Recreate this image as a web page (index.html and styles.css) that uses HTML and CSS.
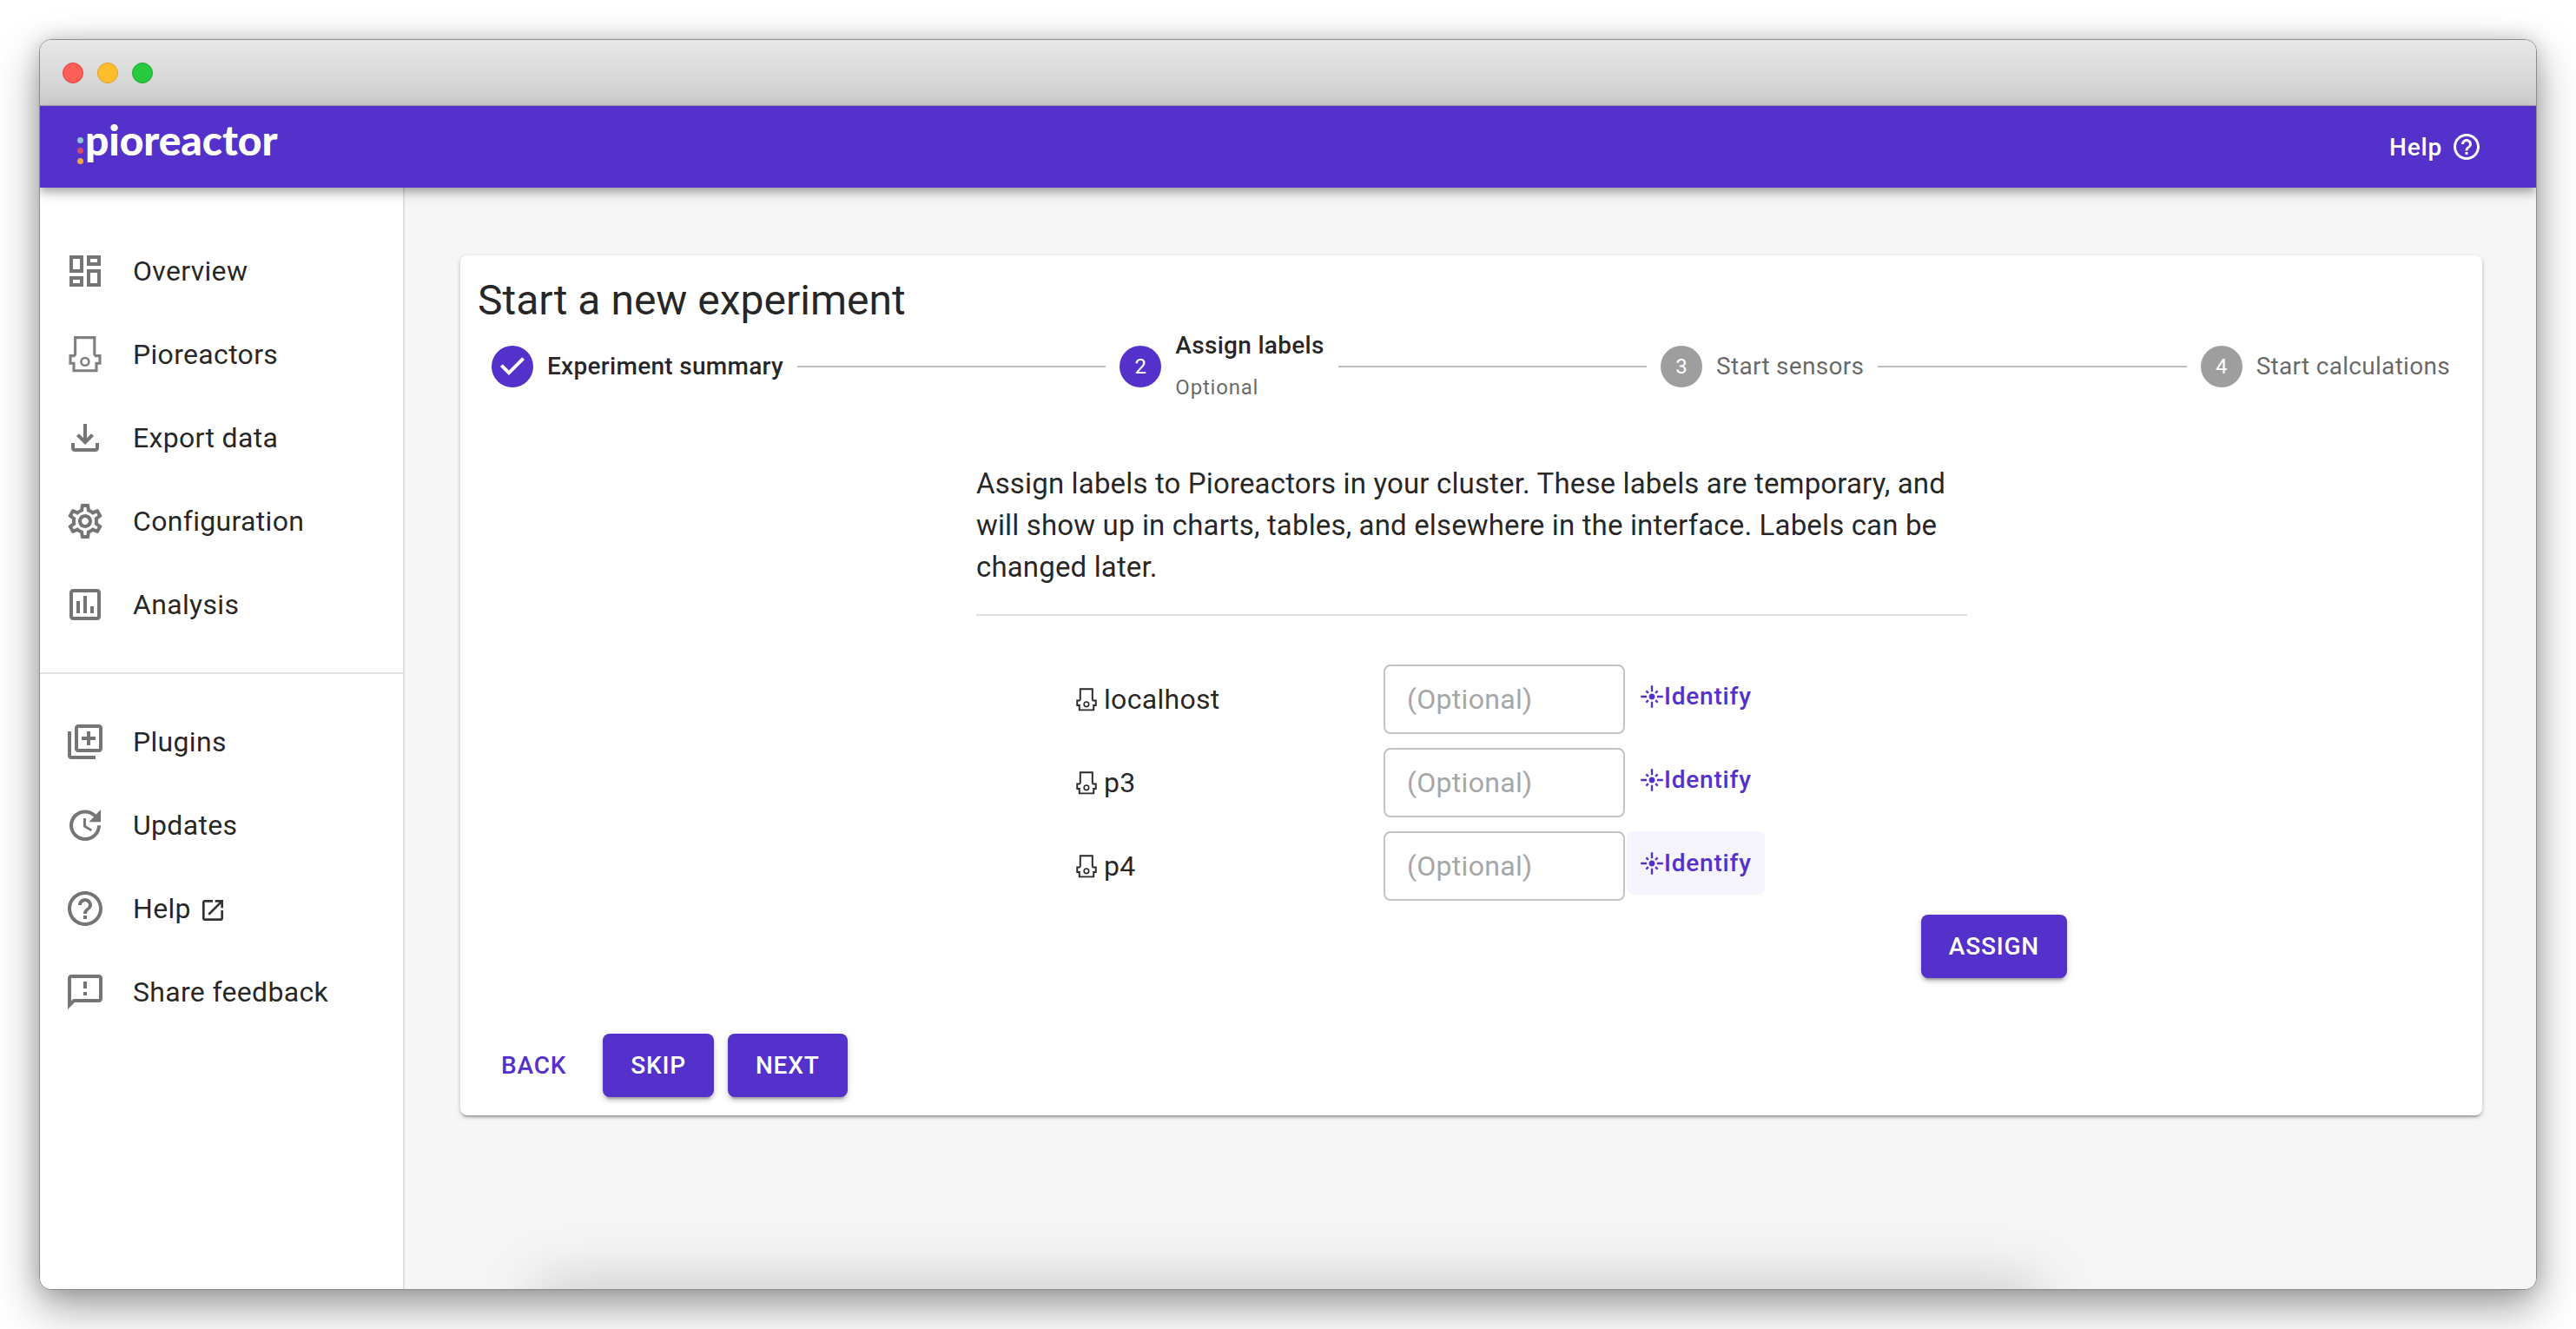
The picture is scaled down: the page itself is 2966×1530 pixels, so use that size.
FILE: index.html
```html
<!DOCTYPE html>
<html lang="en">
<head>
<meta charset="utf-8">
<title>Pioreactor</title>
<link rel="stylesheet" href="styles.css">
</head>
<body>
<svg class="defs" width="0" height="0" aria-hidden="true">
  <symbol id="pio" viewBox="0 0 38 42">
    <path d="M7.6 1.6H29.8V21L31.2 22.6H36V31.2H32V39.8H6V31.2H2V22.6H6.2L7.6 21Z" fill="none" stroke="currentColor" stroke-width="3.1"/>
    <circle cx="18.9" cy="29.4" r="4.4" fill="none" stroke="currentColor" stroke-width="2.6"/>
  </symbol>
  <symbol id="flare" viewBox="0 0 24 24"><path d="M7 11H1v2h6v-2zm2.17-3.24L7.05 5.64 5.64 7.05l2.12 2.12 1.41-1.41zM13 1h-2v6h2V1zm5.36 6.05-1.41-1.41-2.12 2.12 1.41 1.41 2.12-2.12zM17 11v2h6v-2h-6zm-5-2c-1.66 0-3 1.34-3 3s1.34 3 3 3 3-1.34 3-3-1.34-3-3-3zm2.83 7.24 2.12 2.12 1.41-1.41-2.12-2.12-1.41 1.41zm-9.19.71 1.41 1.41 2.12-2.12-1.41-1.41-2.12 2.12zM11 23h2v-6h-2v6z"/></symbol>
  <symbol id="help" viewBox="0 0 24 24"><path d="M11 18h2v-2h-2v2zm1-16C6.48 2 2 6.48 2 12s4.48 10 10 10 10-4.48 10-10S17.52 2 12 2zm0 18c-4.41 0-8-3.59-8-8s3.59-8 8-8 8 3.59 8 8-3.59 8-8 8zm0-14c-2.21 0-4 1.79-4 4h2c0-1.1.9-2 2-2s2 .9 2 2c0 2-3 1.75-3 5h2c0-2.25 3-2.5 3-5 0-2.21-1.79-4-4-4z"/></symbol>
</svg>
<div class="window">
  <div class="titlebar">
    <span class="light red"></span><span class="light yellow"></span><span class="light green"></span>
  </div>
  <header class="appbar">
    <div class="logo">
      <span class="dots"><i class="dot teal"></i><i class="dot rose"></i><i class="dot amber"></i></span>
      <span class="wordmark">pioreactor</span>
    </div>
    <a class="help-link">Help <svg class="help-icon"><use href="#help"/></svg></a>
  </header>
  <div class="body">
    <nav class="sidebar">
      <ul class="nav first">
        <li><svg class="nav-icon" viewBox="0 0 24 24"><path d="M19 5v2h-4V5h4M9 5v6H5V5h4m10 8v6h-4v-6h4M9 17v2H5v-2h4M21 3h-8v6h8V3zM11 3H3v10h8V3zm10 8h-8v10h8V11zm-10 4H3v6h8v-6z"/></svg>Overview</li>
        <li><svg class="nav-pio"><use href="#pio"/></svg>Pioreactors</li>
        <li><svg class="nav-icon" viewBox="0 0 24 24"><path d="M18 15v3H6v-3H4v3c0 1.1.9 2 2 2h12c1.1 0 2-.9 2-2v-3h-2zm-1-4-1.41-1.41L13 12.17V4h-2v8.17L8.41 9.59 7 11l5 5 5-5z"/></svg>Export data</li>
        <li><svg class="nav-icon" viewBox="0 0 24 24"><path d="M19.43 12.98c.04-.32.07-.64.07-.98 0-.34-.03-.66-.07-.98l2.11-1.65c.19-.15.24-.42.12-.64l-2-3.46c-.09-.16-.26-.25-.44-.25-.06 0-.12.01-.17.03l-2.49 1c-.52-.4-1.08-.73-1.69-.98l-.38-2.65C14.46 2.18 14.25 2 14 2h-4c-.25 0-.46.18-.49.42l-.38 2.65c-.61.25-1.17.59-1.69.98l-2.49-1c-.06-.02-.12-.03-.18-.03-.17 0-.34.09-.43.25l-2 3.46c-.13.22-.07.49.12.64l2.11 1.65c-.04.32-.07.65-.07.98 0 .33.03.66.07.98l-2.11 1.65c-.19.15-.24.42-.12.64l2 3.46c.09.16.26.25.44.25.06 0 .12-.01.17-.03l2.49-1c.52.4 1.08.73 1.69.98l.38 2.65c.03.24.24.42.49.42h4c.25 0 .46-.18.49-.42l.38-2.65c.61-.25 1.17-.59 1.69-.98l2.49 1c.06.02.12.03.18.03.17 0 .34-.09.43-.25l2-3.46c.12-.22.07-.49-.12-.64l-2.11-1.65zm-1.98-1.71c.04.31.05.52.05.73 0 .21-.02.43-.05.73l-.14 1.13.89.7 1.08.84-.7 1.21-1.27-.51-1.04-.42-.9.68c-.43.32-.84.56-1.25.73l-1.06.43-.16 1.13-.2 1.35h-1.4l-.19-1.35-.16-1.13-1.06-.43c-.43-.18-.83-.41-1.23-.71l-.91-.7-1.06.43-1.27.51-.7-1.21 1.08-.84.89-.7-.14-1.13c-.03-.31-.05-.54-.05-.74s.02-.43.05-.73l.14-1.13-.89-.7-1.08-.84.7-1.21 1.27.51 1.04.42.9-.68c.43-.32.84-.56 1.25-.73l1.06-.43.16-1.13.2-1.35h1.39l.19 1.35.16 1.13 1.06.43c.43.18.83.41 1.23.71l.91.7 1.06-.43 1.27-.51.7 1.21-1.07.85-.89.7.14 1.13zM12 8c-2.21 0-4 1.79-4 4s1.79 4 4 4 4-1.79 4-4-1.79-4-4-4zm0 6c-1.1 0-2-.9-2-2s.9-2 2-2 2 .9 2 2-.9 2-2 2z"/></svg>Configuration</li>
        <li><svg class="nav-icon" viewBox="0 0 24 24"><path d="M9 17H7v-7h2v7zm4 0h-2V7h2v10zm4 0h-2v-4h2v4zm2 2H5V5h14v14zm0-16H5c-1.1 0-2 .9-2 2v14c0 1.1.9 2 2 2h14c1.1 0 2-.9 2-2V5c0-1.1-.9-2-2-2z"/></svg>Analysis</li>
      </ul>
      <ul class="nav second">
        <li><svg class="nav-icon" viewBox="0 0 24 24"><path d="M4 6H2v14c0 1.1.9 2 2 2h14v-2H4V6zm16-4H8c-1.1 0-2 .9-2 2v12c0 1.1.9 2 2 2h12c1.1 0 2-.9 2-2V4c0-1.1-.9-2-2-2zm0 14H8V4h12v12zm-7-2h2v-3h3V9h-3V6h-2v3h-3v2h3z"/></svg>Plugins</li>
        <li><svg class="nav-icon" viewBox="0 0 24 24"><path d="M21 10.12h-6.78l2.74-2.82c-2.73-2.7-7.15-2.8-9.88-.1-2.73 2.71-2.73 7.08 0 9.79s7.15 2.71 9.88 0C18.32 15.65 19 14.08 19 12.1h2c0 1.98-.88 4.55-2.64 6.29-3.51 3.48-9.21 3.48-12.72 0-3.5-3.47-3.53-9.11-.02-12.58s9.14-3.47 12.65 0L21 3v7.12zM12.5 8v4.25l3.5 2.08-.72 1.21L11 13V8h1.5z"/></svg>Updates</li>
        <li><svg class="nav-icon"><use href="#help"/></svg>Help<svg class="ext-icon" viewBox="0 0 24 24"><path d="M19 19H5V5h7V3H5c-1.11 0-2 .9-2 2v14c0 1.1.89 2 2 2h14c1.1 0 2-.9 2-2v-7h-2v7zM14 3v2h3.59l-9.83 9.83 1.41 1.41L19 6.41V10h2V3h-7z"/></svg></li>
        <li><svg class="nav-icon" viewBox="0 0 24 24"><path d="M20 2H4c-1.1 0-1.99.9-1.99 2L2 22l4-4h14c1.1 0 2-.9 2-2V4c0-1.1-.9-2-2-2zm0 14H5.17L4 17.17V4h16v12zm-9-4h2v2h-2zm0-6h2v4h-2z"/></svg>Share feedback</li>
      </ul>
    </nav>
    <main class="main">
      <section class="card">
        <h1 class="title">Start a new experiment</h1>
        <div class="stepper">
          <div class="step">
            <svg class="step-check" viewBox="0 0 24 24"><path d="M12 0a12 12 0 1 0 0 24 12 12 0 0 0 0-24zm-2 17l-5-5 1.4-1.4 3.6 3.6 7.6-7.6L19 8l-9 9z"/></svg>
            <span class="step-label done">Experiment summary</span>
          </div>
          <span class="connector"></span>
          <div class="step">
            <span class="step-num active">2</span>
            <span class="step-text">
              <span class="step-label done">Assign labels</span>
              <span class="step-optional">Optional</span>
            </span>
          </div>
          <span class="connector"></span>
          <div class="step">
            <span class="step-num">3</span>
            <span class="step-label">Start sensors</span>
          </div>
          <span class="connector"></span>
          <div class="step">
            <span class="step-num">4</span>
            <span class="step-label">Start calculations</span>
          </div>
        </div>
        <div class="content">
          <p class="intro">Assign labels to Pioreactors in your cluster. These labels are temporary, and will show up in charts, tables, and elsewhere in the interface. Labels can be changed later.</p>
          <hr class="rule">
          <form class="labels">
            <div class="label-row">
              <span class="unit"><svg class="unit-icon"><use href="#pio"/></svg>localhost</span>
              <input class="field" placeholder="(Optional)">
              <button type="button" class="identify"><svg class="flare"><use href="#flare"/></svg>Identify</button>
            </div>
            <div class="label-row">
              <span class="unit"><svg class="unit-icon"><use href="#pio"/></svg>p3</span>
              <input class="field" placeholder="(Optional)">
              <button type="button" class="identify"><svg class="flare"><use href="#flare"/></svg>Identify</button>
            </div>
            <div class="label-row">
              <span class="unit"><svg class="unit-icon"><use href="#pio"/></svg>p4</span>
              <input class="field" placeholder="(Optional)">
              <button type="button" class="identify hover"><svg class="flare"><use href="#flare"/></svg>Identify</button>
            </div>
            <div class="assign-row"><button type="button" class="btn primary">Assign</button></div>
          </form>
        </div>
        <div class="actions">
          <button type="button" class="btn text">Back</button>
          <button type="button" class="btn primary">Skip</button>
          <button type="button" class="btn primary">Next</button>
        </div>
      </section>
      <div class="bottom-shadow"></div>
    </main>
  </div>
</div>
</body>
</html>
```
FILE: styles.css
```css
* { box-sizing: border-box; }
html, body { margin: 0; padding: 0; background: #fff; }
body {
  width: 2966px;
  height: 1530px;
  padding: 45px 0 0 45px;
  overflow: hidden;
  font-family: Roboto, "Liberation Sans", sans-serif;
  color: rgba(0, 0, 0, 0.87);
}
.defs { position: absolute; }

.window {
  width: 2876px;
  height: 1440px;
  display: flex;
  flex-direction: column;
  border: 1px solid #8c8c8c;
  border-radius: 14px;
  overflow: hidden;
  background: #fff;
  box-shadow: 0 20px 50px rgba(0, 0, 0, 0.38), 0 0 22px rgba(0, 0, 0, 0.16);
}

.titlebar {
  flex: 0 0 76px;
  display: flex;
  align-items: center;
  gap: 16px;
  padding: 0 0 0 26px;
  background: linear-gradient(#e8e8e8, #cdcdcd);
  border-bottom: 1px solid #a8a8a8;
}
.light { width: 24px; height: 24px; border-radius: 50%; border: 1px solid; }
.red { background: #ff5f57; border-color: #e0443e; }
.yellow { background: #ffbd2e; border-color: #dea123; }
.green { background: #27c93f; border-color: #1aab29; }

.appbar {
  position: relative;
  z-index: 2;
  flex: 0 0 94px;
  display: flex;
  align-items: center;
  justify-content: space-between;
  padding: 0 62px 0 43px;
  background: #5331ca;
  color: #fff;
  box-shadow: 0 4px 8px -2px rgba(0,0,0,.2), 0 8px 10px 0 rgba(0,0,0,.14), 0 2px 20px 0 rgba(0,0,0,.12);
}
.logo { display: flex; align-items: center; }
.dots { display: flex; flex-direction: column; gap: 5px; margin: 8px 2px 0 0; }
.dot { display: block; width: 7px; height: 7px; border-radius: 50%; }
.teal { background: #8fc5d3; }
.rose { background: #d44d63; }
.amber { background: #eeab3d; }
.wordmark {
  font-family: Lato, sans-serif;
  font-weight: 900;
  font-size: 48px;
  line-height: 60px;
  letter-spacing: -0.1px;
  margin-top: -16px;
}
.help-link {
  display: flex;
  align-items: center;
  gap: 14px;
  font-size: 28px;
  font-weight: 500;
  letter-spacing: 0.8px;
}
.help-icon { width: 36px; height: 36px; fill: #fff; margin-left: -4px; }

.body { flex: 1; display: flex; min-height: 0; }
.sidebar {
  flex: 0 0 420px;
  background: #fff;
  border-right: 2px solid #e0e0e0;
}
.nav { list-style: none; margin: 0; }
.nav li {
  height: 96px;
  display: flex;
  align-items: center;
  font-size: 32px;
  letter-spacing: 0.32px;
  padding-left: 28px;
}
.first { padding: 48px 0 30px; border-bottom: 2px solid #e0e0e0; }
.second { padding: 30px 0 0; }
.nav-icon { width: 48px; height: 48px; fill: #757575; margin-right: 31px; flex: none; }
.nav-pio { width: 38px; height: 42px; color: #808080; margin: 0 36px 0 5px; flex: none; }
.ext-icon { width: 32px; height: 32px; fill: #333; margin: 4px 0 0 9px; }

.main {
  position: relative;
  flex: 1;
  padding: 78px 62px 0 64px;
  background: #f6f6f6;
  overflow: hidden;
}
.bottom-shadow {
  position: absolute;
  left: 150px;
  right: 570px;
  bottom: -50px;
  height: 60px;
  background: rgba(0, 0, 0, 0.17);
  filter: blur(32px);
}
.card {
  height: 990px;
  padding: 20px 21px 0 20px;
  background: #fff;
  border-radius: 8px;
  box-shadow: 0 4px 2px -2px rgba(0,0,0,.2), 0 2px 4px 0 rgba(0,0,0,.14), 0 2px 6px 0 rgba(0,0,0,.12);
}
.title {
  margin: 0;
  font-size: 48px;
  font-weight: 400;
  line-height: 64px;
  letter-spacing: 0;
}
.stepper {
  display: flex;
  align-items: center;
  height: 80px;
  margin-top: 4px;
}
.step { display: flex; align-items: center; gap: 16px; padding: 0 16px; flex: none; }
.step-check { width: 48px; height: 48px; fill: #5331ca; flex: none; }
.step-num {
  width: 48px;
  height: 48px;
  border-radius: 50%;
  background: #9e9e9e;
  color: #fff;
  font-size: 24px;
  display: flex;
  align-items: center;
  justify-content: center;
  flex: none;
}
.step-num.active { background: #5331ca; }
.step-text { display: flex; flex-direction: column; }
.step-label {
  font-size: 28px;
  line-height: 40px;
  letter-spacing: 0.3px;
  color: rgba(0, 0, 0, 0.6);
}
.step-label.done { font-weight: 500; color: rgba(0, 0, 0, 0.87); }
.step-optional {
  font-size: 24px;
  line-height: 40px;
  letter-spacing: 0.8px;
  color: rgba(0, 0, 0, 0.6);
  margin-top: 8px;
}
.connector { flex: 1; height: 2px; background: #bdbdbd; }

.content { width: 1141px; margin: 71px 0 0 574px; }
.intro { margin: 0; font-size: 33px; line-height: 48px; letter-spacing: 0.15px; }
.rule { margin: 30px 0 0; border: 0; height: 2px; background: #e0e0e0; }
.labels { width: 1141px; margin: 56px 0 0 115px; }
.label-row { display: flex; align-items: flex-start; height: 80px; margin-bottom: 16px; }
.unit {
  flex: 0 0 354px;
  height: 80px;
  display: flex;
  align-items: center;
  gap: 8px;
  font-size: 32px;
  letter-spacing: 0.3px;
}
.unit-icon { width: 24px; height: 27px; color: #2b2b2b; flex: none; }
.field {
  flex: 0 0 278px;
  width: 278px;
  min-width: 0;
  height: 80px;
  padding: 0 25px;
  font: 400 32px Roboto, sans-serif;
  letter-spacing: 0.3px;
  border: 2px solid #c4c4c4;
  border-radius: 8px;
  background: #fff;
}
.field::placeholder { color: #a6a6a6; opacity: 1; }
.identify {
  display: flex;
  align-items: center;
  height: 73px;
  margin-left: 2px;
  padding: 0 15px 0 15px;
  font: 500 28px Roboto, sans-serif;
  letter-spacing: 0.8px;
  color: #5331ca;
  background: none;
  border: 0;
  border-radius: 8px;
}
.identify.hover { background: #f6f4fc; }
.flare { width: 28px; height: 28px; fill: #5331ca; flex: none; margin-right: 0; }
.assign-row { display: flex; justify-content: flex-end; }
.btn {
  height: 73px;
  font: 500 28px Roboto, sans-serif;
  letter-spacing: 0.8px;
  text-transform: uppercase;
  border: 0;
  border-radius: 8px;
  padding: 0 32px;
}
.primary {
  color: #fff;
  background: #5331ca;
  box-shadow: 0 6px 2px -4px rgba(0,0,0,.2), 0 4px 4px 0 rgba(0,0,0,.14), 0 2px 10px 0 rgba(0,0,0,.12);
}
.text { color: #5331ca; background: none; padding: 0 16px; }
.actions { display: flex; align-items: center; gap: 16px; margin: 64px 0 0 11px; }
.actions .text { margin-right: 10px; }
```
